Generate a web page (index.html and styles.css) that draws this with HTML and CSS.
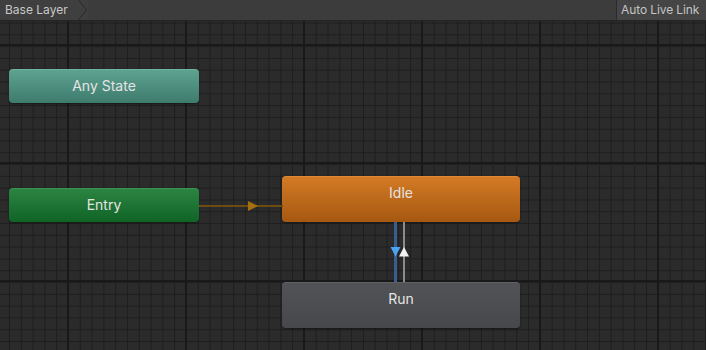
FILE: index.html
```html
<!DOCTYPE html>
<html>
<head>
<meta charset="utf-8">
<link rel="stylesheet" href="styles.css">
</head>
<body>
<div class="window">
  <div class="toolbar">
    <div class="crumb">
      <span class="crumb-label">Base Layer</span>
      <svg class="chev" width="12" height="20" viewBox="0 0 12 20"><path d="M0 0 L0 20 L2 20 L10 10 L2 0 Z" fill="#3f3f3f"/><path d="M2 -0.5 L10.5 10 L2 20.5" fill="none" stroke="#2a2a2a" stroke-width="1"/></svg>
    </div>
    <div class="spacer"></div>
    <div class="live-link">Auto Live Link</div>
  </div>
  <div class="graph">
    <div class="node any">Any State</div>
    <div class="node entry">Entry</div>
    <div class="node idle">Idle</div>
    <div class="node run">Run</div>

    <svg class="edges" width="706" height="329" viewBox="0 21 706 329">
      <line x1="199" y1="206" x2="283" y2="206" stroke="#6b4c12" stroke-width="2"/>
      <polygon points="248,201 258,206 248,211" fill="#a6700f"/>
      <line x1="395.5" y1="222" x2="395.5" y2="282" stroke="#355f8f" stroke-width="3"/>
      <line x1="404" y1="222" x2="404" y2="282" stroke="#8c8c8c" stroke-width="2"/>
      <polygon points="390.5,247 400.5,247 395.5,256.5" fill="#4ea2f4"/>
      <polygon points="399,256.5 409,256.5 404,247" fill="#f2f2f2"/>
    </svg>
  </div>
</div>
</body>
</html>
```
FILE: styles.css
```css
* { box-sizing: border-box; }
html, body { margin: 0; padding: 0; background: #282828; }
body { font-family: Inter, "Noto Sans", sans-serif; }
.window { width: 706px; height: 350px; display: flex; flex-direction: column; overflow: hidden; }
.toolbar {
  height: 21px; flex: none; display: flex; align-items: stretch;
  background: #3c3c3c; border-bottom: 1px solid #242424;
}
.crumb { display: flex; align-items: stretch; background: #3f3f3f; }
.crumb-label { font-size: 12px; color: #c8c8c8; padding: 0 0 0 5px; width: 76px; line-height: 20px; white-space: nowrap; }
.chev { display: block; }
.spacer { flex: 1; }
.live-link {
  font-size: 12px; color: #c4c4c4; line-height: 20px; padding: 0 0 0 4px;
  width: 90px; background: #454545; border-left: 1px solid #2b2b2b;
  white-space: nowrap; letter-spacing: -0.1px; overflow: hidden;
}
.graph {
  position: relative; flex: 1;
  background-color: #2b2b2b;
  background-image:
    linear-gradient(to right, #191919 0, #191919 2px, transparent 2px),
    linear-gradient(to bottom, #191919 0, #191919 2px, transparent 2px),
    linear-gradient(to right, #1e1e1e 0, #1e1e1e 1px, transparent 1px),
    linear-gradient(to bottom, #1e1e1e 0, #1e1e1e 1px, transparent 1px);
  background-size: 118px 100%, 100% 118px, 11.8px 100%, 100% 11.8px;
  background-position: 67px 0, 0 23px, 9px 0, 0 1.5px;
}
.node {
  position: absolute; border-radius: 4px; color: #e4e4e4; font-size: 14px;
  text-align: center; box-shadow: 0 1px 2px rgba(0,0,0,0.45);
}
.any {
  left: 9px; top: 48px; width: 190px; height: 34px; line-height: 32px;
  background: linear-gradient(#5da290, #3e7b6d);
  border-top: 1px solid #6fb3a1;
}
.entry {
  left: 9px; top: 167px; width: 190px; height: 34px; line-height: 32px;
  background: linear-gradient(#2c8442, #0f6426);
  border-top: 1px solid #3d9352;
}
.idle {
  left: 282px; top: 155px; width: 238px; height: 46px; line-height: 31px;
  background: linear-gradient(#d37a25, #a65811);
  border-top: 1px solid #e08a38;
}
.run {
  left: 282px; top: 261px; width: 238px; height: 46px; line-height: 31px;
  background: linear-gradient(#515357, #46484b);
  border-top: 1px solid #5f6165;
}
.edges { position: absolute; left: 0; top: 0; }
```
